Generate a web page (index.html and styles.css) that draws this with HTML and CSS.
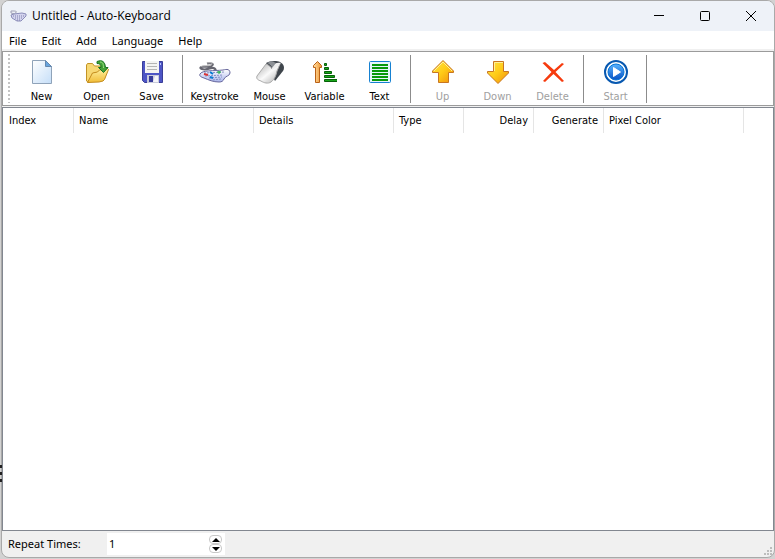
FILE: index.html
```html
<!doctype html>
<html lang="en">
<head>
  <meta charset="utf-8">
  <meta name="viewport" content="width=device-width, initial-scale=1.0">
  <title>Untitled - Auto-Keyboard</title>
  <link rel="stylesheet" href="styles.css">
</head>
<body>

  <div class="desktop-mark"></div>

  <div class="window">
    <header class="titlebar">
      <svg class="app-icon" width="17" height="12" viewBox="0 0 17 12">
        <path d="M5 3c3-1 1-2-1-2H1v2l4 1" fill="none" stroke="#a0a0b4"/>
        <path d="M1 5l3-1 8-1 4 1v2l-2 2-3 3H7L2 8z" fill="#d4d4ee" stroke="#8a8cb8"/>
        <path d="M3 6h11M5 8h7M7 10h4" stroke="#7c80ac" stroke-dasharray="1 1"/>
      </svg>
      <span class="title">Untitled - Auto-Keyboard</span>
      <div class="window-buttons">
        <button aria-label="Minimize"><svg width="10" height="10"><path d="M0 4.500h10" stroke="#000"/></svg></button>
        <button aria-label="Maximize"><svg width="10" height="10"><rect x=".5" y=".5" width="9" height="9" rx="1" fill="none" stroke="#000"/></svg></button>
        <button aria-label="Close"><svg width="10" height="10"><path d="M0 0l10 10M10 0L0 10" stroke="#000"/></svg></button>
      </div>
    </header>

    <nav class="menu">
      <button>File</button>
      <button>Edit</button>
      <button>Add</button>
      <button>Language</button>
      <button>Help</button>
    </nav>

    <div class="toolbar">
      <div class="grip"></div>
      <div class="group">
        <button class="tool">
          <svg width="24" height="24" viewBox="0 0 24 24">
            <defs><linearGradient id="paper" x1="0" y1="0" x2="1" y2="1"><stop offset="0" stop-color="#fff"/><stop offset="1" stop-color="#c5def8"/></linearGradient></defs>
            <path d="M2.500.5h13l6 6v17h-19z" fill="url(#paper)" stroke="#8fa3b9"/>
            <path d="M15.500.5v6h6z" fill="#68a5df" stroke="#6588ae"/>
          </svg>
          New
        </button>
        <button class="tool">
          <svg width="24" height="24" viewBox="0 0 24 24">
            <defs><linearGradient id="folder" x1="0" y1="0" x2="0" y2="1"><stop offset="0" stop-color="#fff0a0"/><stop offset="1" stop-color="#f1bd38"/></linearGradient></defs>
            <path d="M1.500 21V5l1-1.500h5l2 2.500h7l1 1v6L4 22.500z" fill="#f7d873" stroke="#c39325"/>
            <path d="M2.500 22.500l5-9.500 5-1 2-2 8-1.500 1 1-4 10-1.500 1.500-4 1z" fill="url(#folder)" stroke="#c38b1c"/>
            <path d="M12 1.500c5-2 8 0 8.500 6H23l-4.500 5-5-5H16c0-3-1-4-4-4z" fill="#45a337" stroke="#187222"/>
            <path d="M15 2c3 0 3.500 2 3.500 6" fill="none" stroke="#9be083"/>
          </svg>
          Open
        </button>
        <button class="tool">
          <svg width="24" height="24" viewBox="0 0 24 24">
            <path d="M2.500 1.500h20v21h-18l-2-2z" fill="#4d55c5" stroke="#3a3e98"/>
            <path d="M5 1h14v12H5z" fill="#f4f4f2"/>
            <path d="M7 3.500h10M7 6.500h10M7 9.500h10" stroke="#b4b4b4"/>
            <path d="M20 3h1v2h-1z" fill="#b8c6fa"/>
            <path d="M7 15h12v8H7z" fill="#c9cbdc"/>
            <path d="M9 16h4v6H9z" fill="#353a99"/>
            <path d="M15 16h3v6h-5z" fill="#f5f5fa"/>
          </svg>
          Save
        </button>
      </div>
      <div class="separator"></div>
      <div class="group">
        <button class="tool">
          <svg width="32" height="24" viewBox="0 0 32 24">
            <defs><linearGradient id="keys" x1="0" y1="0" x2="0" y2="1"><stop offset="0" stop-color="#fff"/><stop offset="1" stop-color="#a9b5ec"/></linearGradient></defs>
            <path d="M8 3.500c4-1 8 .5 4.500 2.500S2.500 5.500 1.500 7.500s5 2.500 9 1 5.500-.5 6.500 2" fill="none" stroke="#666670" stroke-width="2"/>
            <path d="M8 3c4-1 7 .5 4 2S3 5 2 7" fill="none" stroke="#bbb"/>
            <path d="M1 14c-1 2 1 3 4 4 5 2 9 4 15 4 3 0 4-1 5-3 1-3 6-3 6-6 0-4-3-4-7-3-9 1-21 0-23 4z" fill="url(#keys)" stroke="#66669b"/>
            <path d="M5 13l21-1M6 16l18-1M10 18l13-1M14 20l8-1" stroke="#8590c5" stroke-dasharray="2 1"/>
            <path d="M5 14l4 1" stroke="#d33" stroke-width="2"/>
            <path d="M11 12l3 2M11 17l3 1" stroke="#087bd5" stroke-width="2"/>
            <path d="M20 11v3M18 12h4" stroke="#14aa3b"/>
          </svg>
          Keystroke
        </button>
        <button class="tool">
          <svg width="28" height="24" viewBox="0 0 28 24">
            <defs><linearGradient id="mouse" x1="0" y1="0" x2="1" y2="1"><stop offset="0" stop-color="#aaa"/><stop offset=".5" stop-color="#fafafa"/><stop offset="1" stop-color="#a8a8a8"/></linearGradient></defs>
            <path d="M10 3c3-2 10-3 14-1 4 2 5 6 3 9l-8 10z" fill="#3f454c"/>
            <path d="M10 4c3 1 5 3 6 5 2-4 4-6 8-5l-3 7c-1 4-2 8-6 11-3 2-7 1-10-1-3-1-5-2-4-5z" fill="url(#mouse)" stroke="#aaa"/>
            <path d="M16 6c2-3 6-4 9-3l-4 4-5 3z" fill="#eee"/>
            <path d="M11 3c3 1 5 3 5 5l4-5c-3-2-6-2-9 0z" fill="#8c9095"/>
          </svg>
          Mouse
        </button>
        <button class="tool">
          <svg width="24" height="24" viewBox="0 0 24 24">
            <defs><linearGradient id="orange"><stop offset="0" stop-color="#ffe1a8"/><stop offset="1" stop-color="#ef922c"/></linearGradient></defs>
            <path d="M4.500 1.500l4 4v2h-2v15h-4v-15h-2v-2z" fill="url(#orange)" stroke="#b96116"/>
            <path d="M11.500 3.500h2v2h-2zM11.500 7.500h4v2h-4zM11.500 11.500h7v2h-7zM11.500 15.500h10v2h-10zM11.500 19.500h13v2h-13z" fill="#19a51b" stroke="#056008"/>
          </svg>
          Variable
        </button>
        <button class="tool">
          <svg width="24" height="24" viewBox="0 0 24 24">
            <rect x="1.500" y="1.500" width="21" height="21" rx="1" fill="#e5f5ff" stroke="#1681d2"/>
            <path d="M4 5h16M4 8h16M4 11h16M4 14h16M4 17h16M4 20h16" stroke="#079a0d" stroke-width="2"/>
          </svg>
          Text
        </button>
      </div>
      <div class="separator"></div>
      <div class="group">
        <button class="tool" disabled>
          <svg width="24" height="24" viewBox="0 0 24 24">
            <defs><linearGradient id="gold" x1="0" y1="0" x2="1" y2="1"><stop offset="0" stop-color="#ffe649"/><stop offset=".5" stop-color="#ffcb17"/><stop offset="1" stop-color="#f08d0e"/></linearGradient></defs>
            <path d="M12 .5L22.500 11v1.500h-5v10h-10v-10h-6V11z" fill="url(#gold)" stroke="#c87622"/>
            <path d="M3 11l9-9 9 9" fill="none" stroke="#fff09a"/>
          </svg>
          Up
        </button>
        <button class="tool" disabled>
          <svg width="24" height="24" viewBox="0 0 24 24">
            <path d="M7.500 1.500h10v10h5V13L12 23.500 1.500 13v-1.500h6z" fill="url(#gold)" stroke="#c87622"/>
            <path d="M8.500 11V2.500H17" fill="none" stroke="#fff09a"/>
          </svg>
          Down
        </button>
        <button class="tool" disabled>
          <svg width="24" height="24" viewBox="0 0 24 24">
            <path d="M1.500 3L4 2l9 8 8-7 2 1-8.500 8 8.500 9-2 1-8.500-8L4 22l-2-1 8.500-9z" fill="#f63b0e"/>
          </svg>
          Delete
        </button>
      </div>
      <div class="separator"></div>
      <div class="group">
        <button class="tool" disabled>
          <svg width="24" height="24" viewBox="0 0 24 24">
            <defs><linearGradient id="blue" x1="0" y1="0" x2="0" y2="1"><stop offset="0" stop-color="#59b4ff"/><stop offset="1" stop-color="#0751c4"/></linearGradient></defs>
            <circle cx="12" cy="12" r="11" fill="#fff" stroke="#0758b0" stroke-width="2"/>
            <circle cx="12" cy="12" r="8" fill="url(#blue)" stroke="#0875d7"/>
            <path d="M9.500 7.500v9l7-4.500z" fill="#fff" stroke="#fff"/>
          </svg>
          Start
        </button>
      </div>
      <div class="separator"></div>
    </div>

    <main class="list">
      <table>
        <colgroup>
          <col class="col-index">
          <col class="col-name">
          <col class="col-wide">
          <col class="col-small">
          <col class="col-small">
          <col class="col-small">
          <col class="col-wide">
          <col>
        </colgroup>
        <thead>
          <tr>
            <th>Index</th>
            <th>Name</th>
            <th>Details</th>
            <th>Type</th>
            <th class="right">Delay</th>
            <th class="right">Generate</th>
            <th>Pixel Color</th>
            <td></td>
          </tr>
        </thead>
      </table>
    </main>

    <footer class="status">
      <label for="repeat">Repeat Times:</label>
      <div class="spinner">
        <input id="repeat" type="text" value="1">
        <div class="spin-buttons">
          <button aria-label="More"><svg width="8" height="4"><path d="M4 0l4 4H0z"/></svg></button>
          <button aria-label="Less"><svg width="8" height="4"><path d="M0 0h8L4 4z"/></svg></button>
        </div>
      </div>
      <svg class="resize" width="11" height="11" fill="#bdbdbd"><path d="M7 1h2v2H7zM4 4h2v2H4zM7 4h2v2H7zM1 7h2v2H1zM4 7h2v2H4zM7 7h2v2H7z"/></svg>
    </footer>
  </div>

</body>
</html>
```

FILE: styles.css
```css
* {
  box-sizing: border-box;
}
body {
  margin: 0;
  height: 100vh;
  padding: 0 0 1px 1px;
  display: flex;
  background: #d2d2d2;
  color: #000;
  font-family: "Noto Sans", "Open Sans", sans-serif;
  font-size: 11px;
  line-height: 16px;
}
button {
  margin: 0;
  padding: 0;
  border: 0;
  background: none;
  color: inherit;
  font: inherit;
}
svg {
  display: block;
}

/* bit of the desktop showing past the window edge */
.desktop-mark {
  position: absolute;
  left: 0;
  top: 465px;
  width: 2px;
  height: 17px;
  z-index: 1;
  background: repeating-linear-gradient(#222 0 3px, transparent 3px 7px);
}

.window {
  flex: 1;
  display: flex;
  flex-direction: column;
  border: 1px solid #a9a9a9;
  border-radius: 8px;
  background: #f0f0f0;
  overflow: hidden;
}

.titlebar {
  display: flex;
  align-items: center;
  height: 30px;
  padding-left: 8px;
  background: #eef2f8;
}
.title {
  flex: 1;
  margin-left: 5px;
  font-family: "Open Sans", "Noto Sans", sans-serif;
  font-size: 12px;
}
.window-buttons {
  display: flex;
}
.window-buttons button {
  width: 46px;
  height: 30px;
  display: grid;
  place-items: center;
}

.menu {
  display: flex;
  gap: 1px;
  height: 18px;
  padding-top: 1px;
  background: #fff;
}
.menu button {
  padding: 0 7px;
}

.toolbar {
  display: flex;
  height: 55px;
  margin-top: 2px;
  border: 1px solid #9b9b9b;
  background: #fff;
}
.grip {
  width: 2px;
  margin: 2px 4px 2px 5px;
  background: repeating-linear-gradient(#c4c4c4 0 2px, transparent 2px 4px);
}
.group {
  display: flex;
}
.tool {
  width: 55px;
  display: flex;
  flex-direction: column;
  align-items: center;
  padding-top: 8px;
  gap: 5px;
  font-family: "DejaVu Sans Condensed", "DejaVu Sans", sans-serif;
}
.tool:disabled {
  color: #a0a0a0;
}
.separator {
  width: 1px;
  margin: 3px 4px 2px 3px;
  background: #8c8c8c;
}

.list {
  flex: 1;
  margin-top: 1px;
  border: 1px solid #828790;
  background: #fff;
  font-family: "DejaVu Sans Condensed", "DejaVu Sans", sans-serif;
}
table {
  width: 100%;
  table-layout: fixed;
  border-collapse: separate;
  border-spacing: 0;
}
th,
td {
  height: 25px;
  padding: 0 5px;
  text-align: left;
  font-weight: normal;
}
th {
  border-right: 1px solid #e5e5e5;
}
th:first-child {
  padding-left: 6px;
}
.right {
  text-align: right;
}
.col-index {
  width: 71px;
}
.col-name {
  width: 180px;
}
.col-wide {
  width: 140px;
}
.col-small {
  width: 70px;
}

.status {
  display: flex;
  align-items: center;
  height: 26px;
  padding-left: 6px;
}
.status label {
  width: 99px;
}
.spinner {
  display: flex;
  align-items: center;
  width: 118px;
  height: 22px;
  padding-right: 3px;
  background: #fff;
}
.spinner input {
  flex: 1;
  min-width: 0;
  padding: 0 2px;
  border: 0;
  background: none;
  font: inherit;
}
.spin-buttons button {
  display: grid;
  place-items: center;
  width: 13px;
  height: 9px;
  border: 1px solid #c8c8c8;
  border-radius: 4px;
}
.resize {
  align-self: flex-end;
  margin-left: auto;
}
```
